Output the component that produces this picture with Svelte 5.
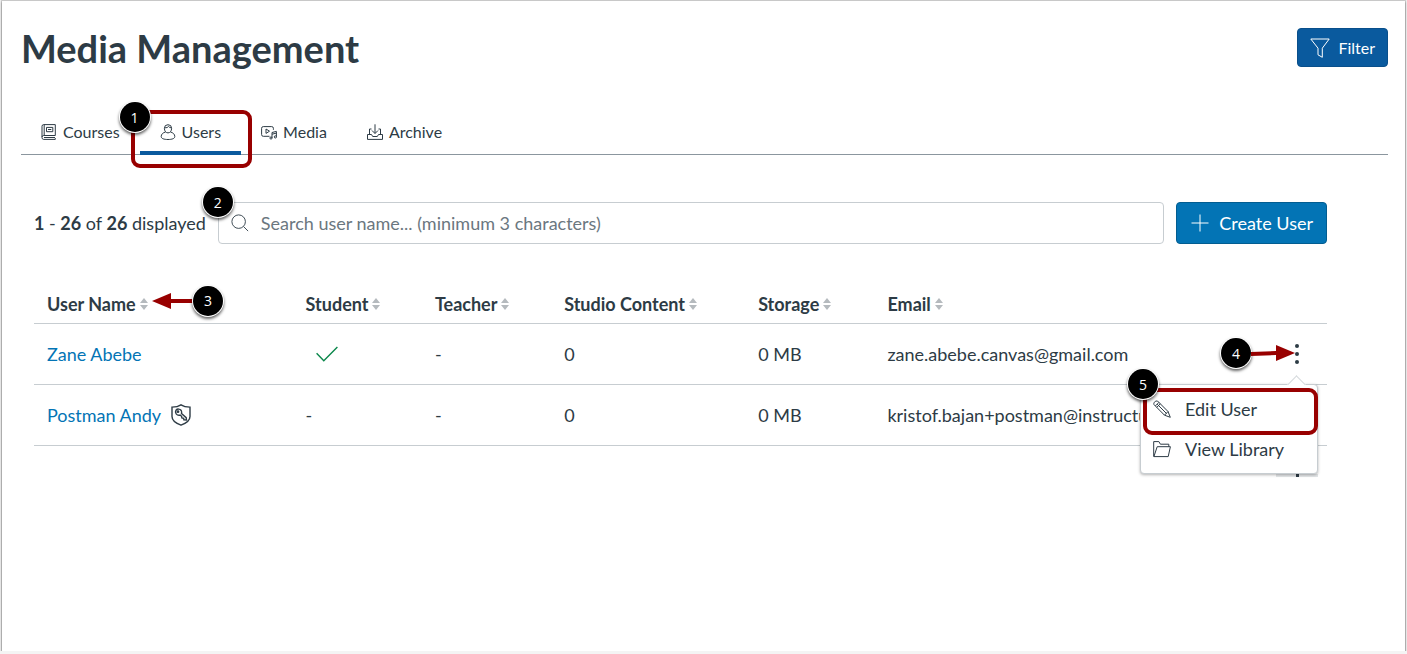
<script>
	let search = $state('');
	let openMenu = $state(1);
	let sortKey = $state('');

	const tabs = [
		{ id: 'courses', label: 'Courses' },
		{ id: 'users', label: 'Users' },
		{ id: 'media', label: 'Media' },
		{ id: 'archive', label: 'Archive' }
	];

	const columns = [
		{ key: 'name', label: 'User Name' },
		{ key: 'student', label: 'Student' },
		{ key: 'teacher', label: 'Teacher' },
		{ key: 'content', label: 'Studio Content' },
		{ key: 'storage', label: 'Storage' },
		{ key: 'email', label: 'Email' }
	];

	const users = [
		{
			id: 1,
			name: 'Zane Abebe',
			student: true,
			content: 0,
			storage: '0 MB',
			email: 'zane.abebe.canvas@gmail.com'
		},
		{
			id: 2,
			name: 'Postman Andy',
			admin: true,
			content: 0,
			storage: '0 MB',
			email: 'kristof.bajan+postman@instructu'
		}
	];

	const sorted = $derived(
		sortKey
			? [...users].sort((a, b) => String(a[sortKey]).localeCompare(String(b[sortKey])))
			: users
	);

	const toggleMenu = (id) => {
		openMenu = openMenu === id ? 0 : id;
	};
</script>

{#snippet tabIcon(id)}
	<svg class="icon tab-icon" viewBox="0 0 16 16" aria-hidden="true">
		{#if id === 'courses'}
			<path d="M14.3 11.5V.6H2.7Q1 .6 1 2.3v11.4q0 1.7 1.7 1.7h11.6v-1.3M14.3 11.5H2.7Q1 11.5 1 13M3.2.6v10.9M5.5 3.4h6.3v4.3H5.5zM7 5.5h3.3M3 13.5h11" />
		{:else if id === 'users'}
			<path d="M4.4 4.3a3.6 3.6 0 0 1 7.2 0c0 2.7-1.5 4.6-3.6 4.6S4.4 7 4.4 4.3zM4.6 3.8c2 .1 3.2-.4 4-1.4.6 1 1.6 1.5 2.9 1.5M5.6 8C3 8.6 1.2 10.2 1.2 12.5c0 2.1 2.8 3 6.8 3s6.8-.9 6.8-3C14.8 10.2 13 8.6 10.4 8" />
		{:else if id === 'media'}
			<path d="M8.5 12.3H2.3Q.6 12.3.6 10.6V4.3Q.6 2.6 2.3 2.6h8.4q1.7 0 1.7 1.7v1.5M5 5v4.4L8.5 7.2zM11 14V8.5l4.4-1.1v5.3M11 10.2l4.4-1.1" />
			<circle cx="10" cy="14" r="1.1" />
			<circle cx="14.4" cy="12.9" r="1.1" />
		{:else}
			<path d="M4.5 5H2.5v5.5M11.5 5h2v5.5M8 .3v9M5 6.5l3 3 3-3M.5 10.5h4l1.2 2h4.6l1.2-2h4v4.9H.5z" />
		{/if}
	</svg>
{/snippet}

<div class="page">
	<header class="page-header">
		<h1>Media Management</h1>
		<button class="btn filter-btn">
			<svg class="icon" viewBox="0 0 20 20" aria-hidden="true">
				<path d="M.8 1h18.4L12.3 10.2v9.1L8 16.8v-6.6z" />
			</svg>
			Filter
		</button>
	</header>

	<nav class="tabs">
		{#each tabs as tab}
			<a href="#{tab.id}" class="tab" class:active={tab.id === 'users'}>
				{@render tabIcon(tab.id)}
				{tab.label}
				{#if tab.id === 'users'}
					<span class="outline tab-outline"></span>
					<span class="marker marker-1">1</span>
				{/if}
			</a>
		{/each}
	</nav>

	<main>
		<div class="toolbar">
			<p class="count"><strong>1</strong> - <strong>26</strong> of <strong>26</strong> displayed</p>
			<div class="search">
				<svg class="icon search-icon" viewBox="0 0 20 20" aria-hidden="true">
					<circle cx="8.5" cy="8.5" r="7.5" />
					<path d="M14 14l5 5" />
				</svg>
				<input
					type="text"
					aria-label="Search user name"
					placeholder="Search user name... (minimum 3 characters)"
					bind:value={search}
				/>
				<span class="marker marker-2">2</span>
			</div>
			<button class="btn create-btn">
				<svg class="icon" viewBox="0 0 18 18" aria-hidden="true">
					<path d="M9 .5v17M.5 9h17" />
				</svg>
				Create User
			</button>
		</div>

		<table>
			<colgroup>
				<col class="col-name" />
				<col class="col-flag" />
				<col class="col-flag" />
				<col class="col-content" />
				<col class="col-flag" />
				<col class="col-email" />
				<col class="col-flag" />
			</colgroup>
			<thead>
				<tr>
					{#each columns as column}
						<th scope="col">
							<button class="sort" onclick={() => (sortKey = column.key)}>
								{column.label}
								<svg class="sort-icon" viewBox="0 0 8 12" aria-hidden="true">
									<path d="M4 0l4 5H0zM4 12l4-5H0z" />
								</svg>
								{#if column.key === 'name'}
									<span class="pointer pointer-3">
										<svg class="arrow" viewBox="0 0 44 16" aria-hidden="true">
											<path d="M0 8L19 0v6h25v4H19v6z" />
										</svg>
										<span class="marker">3</span>
									</span>
								{/if}
							</button>
						</th>
					{/each}
					<th scope="col" aria-label="Actions"></th>
				</tr>
			</thead>
			<tbody>
				{#each sorted as user (user.id)}
					<tr>
						<td>
							<div class="name">
								<a href="#user-{user.id}">{user.name}</a>
								{#if user.admin}
									<svg class="icon shield" viewBox="0 0 20 22" aria-hidden="true">
										<path d="M10 .8c2.5 1.7 5.5 2.3 9 2.3v9.4c0 4-4.5 7-9 8.7-4.5-1.7-9-4.7-9-8.7V3.1C4.5 3.1 7.5 2.5 10 .8z" />
										<path d="M5 6.2C6.3 4.6 9 4.7 10.2 6.5c.6 1 .5 2.2.3 3l4.7 4.2.3 2.3-2.6-.1-.3-1.6-1.7-.3-.3-1.7-1.5-1.2c-1.5.4-3-.1-3.9-1.3-.8-1.2-.9-2.5-.2-3.6z" />
										<circle cx="7" cy="7.7" r=".7" />
									</svg>
								{/if}
							</div>
						</td>
						<td>
							{#if user.student}
								<svg class="check" viewBox="0 0 22 16" aria-label="Yes">
									<path d="M.6 7.2L7.8 14.7 21.4 1" />
								</svg>
							{:else}
								-
							{/if}
						</td>
						<td>-</td>
						<td>{user.content}</td>
						<td>{user.storage}</td>
						<td>{user.email}</td>
						<td class="actions">
							{#if user.id === 1}
								<div class="menu-anchor">
									<button class="kebab" aria-label="Actions" onclick={() => toggleMenu(user.id)}>
										<svg viewBox="0 0 4 20" aria-hidden="true">
											<circle cx="2" cy="2" r="2" />
											<circle cx="2" cy="10" r="2" />
											<circle cx="2" cy="18" r="2" />
										</svg>
									</button>
									<span class="pointer pointer-4">
										<span class="marker">4</span>
										<svg class="arrow" viewBox="0 0 44 16" aria-hidden="true">
											<path d="M44 8L25 0v6L0 7v4l25-1v6z" />
										</svg>
									</span>
									{#if openMenu === user.id}
										<div class="menu">
											<button class="menu-item">
												<svg class="icon" viewBox="0 0 18 18" aria-hidden="true">
													<path d="M1 2.8Q2.5.2 4.5 1L15 11.5 17.3 17.3 11.5 15.2 1 4.6Q.6 3.7 1 2.8zM5.9 2.4L2.4 5.9M4.2 4.2l9.4 9.4M15 11.5l-3.5 3.7M7.3 3.8L3.8 7.3" />
												</svg>
												Edit User
												<span class="outline item-outline"></span>
												<span class="marker marker-5">5</span>
											</button>
											<button class="menu-item">
												<svg class="icon" viewBox="0 0 18 18" aria-hidden="true">
													<path d="M.7 16.5V1.6h5.2l1.5 2.6h8.4v2.5M.9 16.6L4.2 6.7h13.2l-2.2 9.9z" />
												</svg>
												View Library
											</button>
										</div>
									{/if}
								</div>
							{/if}
						</td>
					</tr>
				{/each}
			</tbody>
		</table>
		<!-- top edge of the next row's action button -->
		<div class="next-row"><span></span></div>
	</main>
</div>

<style>
	:global(body) {
		margin: 0;
		background: #f4f4f4;
		font-family: Lato, 'Liberation Sans', sans-serif;
		color: #2d3b45;
	}

	.page {
		box-sizing: border-box;
		min-height: calc(100vh - 4px);
		margin: 1px 2px 0;
		padding: 27px 17px 0 19px;
		background: #fff;
		box-shadow:
			0 0 1px 1px rgba(0, 0, 0, 0.15),
			0 1px 2px rgba(0, 0, 0, 0.5);
	}

	button,
	input {
		font: inherit;
		color: inherit;
	}

	button {
		padding: 0;
		border: none;
		background: none;
		cursor: pointer;
	}

	a {
		color: #0374b5;
		text-decoration: none;
	}

	.icon {
		flex: none;
		width: 18px;
		height: 18px;
		fill: none;
		stroke: currentColor;
	}

	.page-header {
		display: flex;
		justify-content: space-between;
		align-items: center;
	}

	h1 {
		margin: 0;
		font-size: 38px;
		line-height: 38px;
		font-weight: 700;
	}

	.btn {
		display: flex;
		align-items: center;
		box-sizing: border-box;
		color: #fff;
		border-radius: 4px;
		white-space: nowrap;
	}

	.filter-btn {
		height: 39px;
		padding: 0 12px;
		gap: 8px;
		background: #0a5a9e;
		border: 1px solid #094f8b;
		font-size: 16px;
	}

	.filter-btn .icon {
		width: 20px;
		height: 20px;
	}

	.tabs {
		display: flex;
		margin-top: 45px;
		border-bottom: 1px solid #8b969e;
	}

	.tab {
		position: relative;
		display: flex;
		align-items: center;
		gap: 6px;
		height: 39px;
		padding: 0 20px;
		border-bottom: 4px solid transparent;
		margin-bottom: -1px;
		font-size: 16px;
		color: #2d3b45;
	}

	.tab.active {
		border-bottom-color: #0a5a9e;
	}

	.tab-icon {
		width: 16px;
		height: 16px;
	}

	main {
		padding: 47px 61px 0 13px;
	}

	.toolbar {
		display: flex;
		align-items: center;
		gap: 12px;
		font-size: 18px;
	}

	.count {
		margin: 0;
		white-space: nowrap;
	}

	.search {
		position: relative;
		display: flex;
		flex: 1;
		align-items: center;
		box-sizing: border-box;
		height: 42px;
		padding: 0 12px;
		gap: 12px;
		border: 1px solid #c7cdd1;
		border-radius: 4px;
	}

	.search-icon {
		width: 18px;
		height: 18px;
	}

	.search input {
		flex: 1;
		min-width: 0;
		padding: 0;
		border: none;
		outline: none;
		background: none;
	}

	.search input::placeholder {
		color: #6b7780;
		opacity: 1;
	}

	.create-btn {
		height: 42px;
		padding: 0 13px 0 14px;
		gap: 10px;
		background: #0374b5;
		border: 1px solid #025d91;
		font-size: 18px;
	}

	table {
		width: 100%;
		margin-top: 40px;
		table-layout: fixed;
		border-collapse: separate;
		border-spacing: 0;
		font-size: 18px;
	}

	.col-name {
		width: 20%;
	}

	.col-flag {
		width: 10%;
	}

	.col-content {
		width: 15%;
	}

	.col-email {
		width: 25%;
	}

	th,
	td {
		padding: 0 0 0 13px;
		border-bottom: 1px solid #c7cdd1;
		text-align: left;
		white-space: nowrap;
	}

	th {
		height: 39px;
	}

	td {
		height: 60px;
	}

	.sort {
		position: relative;
		display: flex;
		align-items: center;
		gap: 4px;
		font-weight: 700;
	}

	.sort-icon {
		width: 8px;
		height: 12px;
		fill: #b5babe;
	}

	.name {
		display: flex;
		align-items: center;
		gap: 10px;
	}

	.name .shield {
		width: 20px;
		height: 22px;
		stroke-width: 1.4;
	}

	.check {
		display: block;
		width: 22px;
		height: 16px;
		margin-left: 10px;
		fill: none;
		stroke: #0b874b;
		stroke-width: 1.4;
	}

	.actions {
		padding: 0 9px 0 0;
	}

	.menu-anchor {
		position: relative;
		width: 42px;
		margin-left: auto;
	}

	.kebab {
		display: flex;
		justify-content: center;
		align-items: center;
		width: 42px;
		height: 36px;
	}

	.kebab svg {
		width: 4px;
		height: 20px;
		fill: #2d3b45;
	}

	.menu {
		position: absolute;
		top: 48px;
		right: 0;
		z-index: 2;
		box-sizing: border-box;
		width: 178px;
		padding: 4px 0;
		background: #fff;
		border: 1px solid #c7cdd1;
		border-radius: 4px;
		box-shadow: 0 1px 3px rgba(0, 0, 0, 0.3);
	}

	.menu::before {
		content: '';
		position: absolute;
		top: -7px;
		right: 14px;
		width: 12px;
		height: 12px;
		background: #fff;
		border: 1px solid #d5dadd;
		border-right: none;
		border-bottom: none;
		transform: rotate(45deg);
	}

	.menu-item {
		position: relative;
		display: flex;
		align-items: center;
		gap: 14px;
		width: 100%;
		height: 40px;
		padding: 0 12px;
	}

	.next-row {
		display: flex;
		justify-content: flex-end;
		padding: 28px 9px 0 0;
	}

	.next-row span {
		width: 42px;
		height: 3px;
		background: linear-gradient(#2d3b45, #2d3b45) center / 3px 3px no-repeat #e3e6e8;
	}

	/* numbered callouts */
	.marker {
		display: flex;
		justify-content: center;
		align-items: center;
		width: 30px;
		height: 30px;
		border-radius: 50%;
		background: #000;
		box-shadow:
			0 0 0 1px #fff,
			0 2px 3px 1px rgba(0, 0, 0, 0.6);
		color: #fff;
		font-family: 'Open Sans', sans-serif;
		font-size: 14px;
		font-weight: 400;
	}

	.outline {
		position: absolute;
		border: 4px solid #980000;
		border-radius: 9px;
		pointer-events: none;
	}

	.tab-outline {
		inset: -2px -11px -17px -9px;
	}

	.item-outline {
		inset: -1px -1px -6px 2px;
	}

	.marker-1,
	.marker-2,
	.marker-5 {
		position: absolute;
		z-index: 1;
	}

	.marker-1 {
		top: -10px;
		left: -20px;
	}

	.marker-2 {
		top: -16px;
		left: -16px;
	}

	.marker-5 {
		top: -20px;
		left: -13px;
	}

	.pointer {
		position: absolute;
		display: flex;
		align-items: center;
	}

	.pointer-3 {
		top: -7px;
		left: 105px;
	}

	.pointer-4 {
		top: 2px;
		right: 23px;
	}

	.arrow {
		width: 44px;
		height: 16px;
		fill: #980000;
	}

	.pointer-3 .arrow {
		margin-right: -3px;
	}
</style>
